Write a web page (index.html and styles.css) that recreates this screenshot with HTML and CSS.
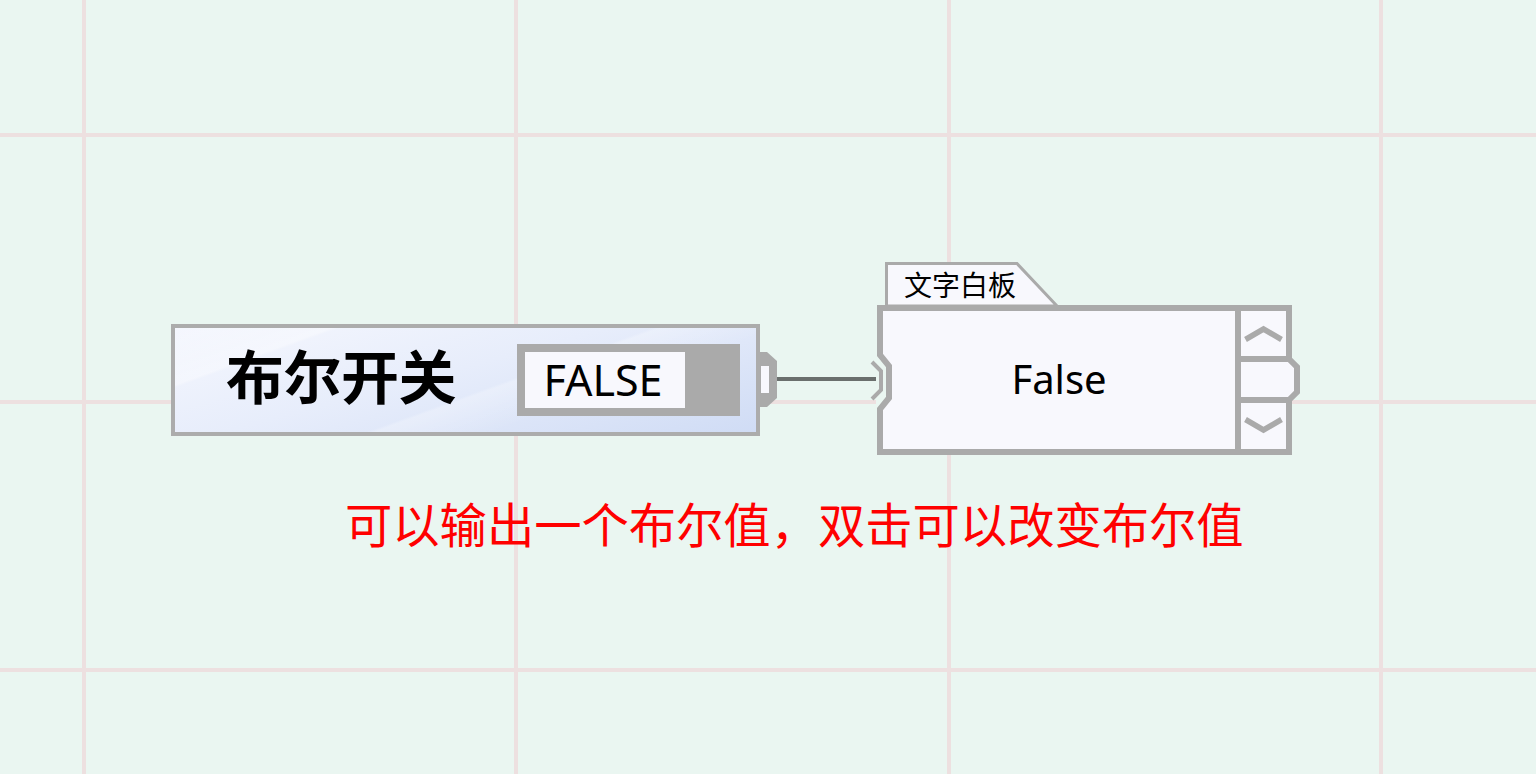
FILE: index.html
```html
<!DOCTYPE html>
<html lang="zh">
<head>
<meta charset="utf-8">
<title>布尔开关</title>
<link rel="stylesheet" href="styles.css">
</head>
<body>
<div class="canvas">
  <svg class="grid" width="1536" height="774" viewBox="0 0 1536 774" aria-hidden="true">
    <g fill="#ede0e0">
      <rect x="82" y="0" width="4" height="774"/>
      <rect x="514" y="0" width="4" height="774"/>
      <rect x="947" y="0" width="4" height="774"/>
      <rect x="1379" y="0" width="4" height="774"/>
      <rect x="0" y="133" width="1536" height="4"/>
      <rect x="0" y="400" width="1536" height="4"/>
      <rect x="0" y="668" width="1536" height="4"/>
    </g>
  </svg>

  <div class="wire"></div>

  <div class="node bool-node">
    <span class="bool-title">布尔开关</span>
    <div class="toggle">
      <span class="toggle-value">FALSE</span>
    </div>
  </div>

  <svg class="port-out" width="26" height="64" viewBox="0 0 26 64" aria-hidden="true">
    <polygon points="4,4 11,4 21,13 21,50 11,59 4,59" fill="#aaaaaa"/>
    <rect x="5" y="18" width="8" height="27" fill="#f8f8fd"/>
  </svg>

  <div class="node text-node">
    <div class="tab">
      <svg class="tab-shape" width="176" height="46" viewBox="0 0 176 46" aria-hidden="true">
        <polygon points="1.5,1.5 132,1.5 172,44 1.5,44" fill="#f8f8fd" stroke="#aaaaaa" stroke-width="3"/>
      </svg>
      <span class="tab-label">文字白板</span>
    </div>
    <div class="board">
      <div class="board-text">False</div>
      <div class="spin">
        <div class="spin-cell">
          <svg width="45" height="45" viewBox="0 0 45 45" aria-hidden="true">
            <polyline points="4.5,28.5 22.5,18 40.5,28.5" fill="none" stroke="#aaaaaa" stroke-width="5.5"/>
          </svg>
        </div>
        <div class="spin-cell"></div>
        <div class="spin-cell">
          <svg width="45" height="46" viewBox="0 0 45 46" aria-hidden="true">
            <polyline points="4.5,16.5 22.5,27 40.5,16.5" fill="none" stroke="#aaaaaa" stroke-width="5.5"/>
          </svg>
        </div>
      </div>
    </div>
  </div>

  <svg class="port-in" width="30" height="64" viewBox="0 0 30 64" aria-hidden="true">
    <polygon points="10,4 20,16 20,48 10,60" fill="#eaf6f1"/>
    <polyline points="14,0 14,5 23,16 23,48 14,59 14,64" fill="none" stroke="#aaaaaa" stroke-width="6"/>
    <polyline points="6,12 15,21 15,40 6,49" fill="none" stroke="#aaaaaa" stroke-width="4"/>
  </svg>

  <svg class="bump" width="24" height="60" viewBox="0 0 24 60" aria-hidden="true">
    <polygon points="6,12 10,12 14,16 14,43 10,47 6,47" fill="#f8f8fd"/>
    <polyline points="8,8 17,17 17,42 8,51" fill="none" stroke="#aaaaaa" stroke-width="6"/>
  </svg>

  <p class="note">可以输出一个布尔值，双击可以改变布尔值</p>
</div>
</body>
</html>
```

FILE: styles.css
```css
* {
  box-sizing: border-box;
}

html, body {
  margin: 0;
  padding: 0;
}

body {
  width: 1536px;
  height: 774px;
  overflow: hidden;
  background: #eaf6f1;
  font-family: "Noto Sans CJK SC", "Noto Sans", sans-serif;
}

.canvas {
  position: relative;
  width: 1536px;
  height: 774px;
}

.grid {
  position: absolute;
  left: 0;
  top: 0;
  display: block;
}

/* ---------- boolean switch node ---------- */
.node {
  position: absolute;
}

.bool-node {
  left: 171px;
  top: 324px;
  width: 589px;
  height: 112px;
  border: 4px solid #acacac;
  background:
    linear-gradient(160deg, rgba(255,255,255,0) 0%, rgba(255,255,255,0.35) 18%, rgba(255,255,255,0) 19%, rgba(255,255,255,0) 55%, rgba(255,255,255,0.25) 56%, rgba(255,255,255,0) 70%),
    linear-gradient(165deg, #f5f7fe 0%, #e7edfb 45%, #d0dcf5 100%);
  display: flex;
  align-items: center;
  padding: 0 16px 0 51px;
}

.bool-title {
  font-size: 58px;
  font-weight: 700;
  color: #000;
  line-height: 1;
  letter-spacing: -0.5px;
  margin-top: -12px;
}

.toggle {
  margin-left: auto;
  width: 223px;
  height: 72px;
  background: #aaaaaa;
  padding: 8px 55px 8px 8px;
  display: flex;
}

.toggle-value {
  flex: 1;
  background: #f8f8fd;
  display: flex;
  align-items: center;
  justify-content: center;
  font-family: "Noto Sans", sans-serif;
  font-size: 43px;
  color: #000;
  line-height: 1;
  padding-right: 4px;
  padding-bottom: 2px;
}

.port-out {
  position: absolute;
  left: 756px;
  top: 348px;
  display: block;
}

.wire {
  position: absolute;
  left: 777px;
  top: 377px;
  width: 103px;
  height: 4px;
  background: #6a6f6d;
}

/* ---------- text board node ---------- */
.text-node {
  left: 877px;
  top: 262px;
  width: 415px;
  display: flex;
  flex-direction: column;
}

.tab {
  position: relative;
  margin-left: 8px;
  width: 176px;
  height: 43px;
  display: flex;
  align-items: center;
  padding-left: 19px;
}

.tab-shape {
  position: absolute;
  left: 0;
  top: 0;
  display: block;
}

.tab-label {
  position: relative;
  font-size: 28px;
  line-height: 1;
  color: #000;
  margin-top: 0;
}

.board {
  height: 150px;
  border: 6px solid #aaaaaa;
  background: #aaaaaa;
  display: grid;
  grid-template-columns: 1fr 45px;
  column-gap: 6px;
}

.board-text {
  background: #f8f8fd;
  display: flex;
  align-items: center;
  justify-content: center;
  font-family: "Noto Sans", sans-serif;
  font-size: 40px;
  line-height: 1;
  color: #000;
  padding-bottom: 2px;
}

.spin {
  display: grid;
  grid-template-rows: 45px 35px 1fr;
  row-gap: 6px;
}

.spin-cell {
  background: #f8f8fd;
}

.spin-cell svg {
  display: block;
}

.port-in {
  position: absolute;
  left: 866px;
  top: 350px;
  display: block;
}

.bump {
  position: absolute;
  left: 1280px;
  top: 350px;
  display: block;
}

/* ---------- annotation ---------- */
.note {
  position: absolute;
  left: 345px;
  top: 499px;
  margin: 0;
  font-size: 47.3px;
  line-height: 1;
  color: #ff0000;
  white-space: nowrap;
}
```
